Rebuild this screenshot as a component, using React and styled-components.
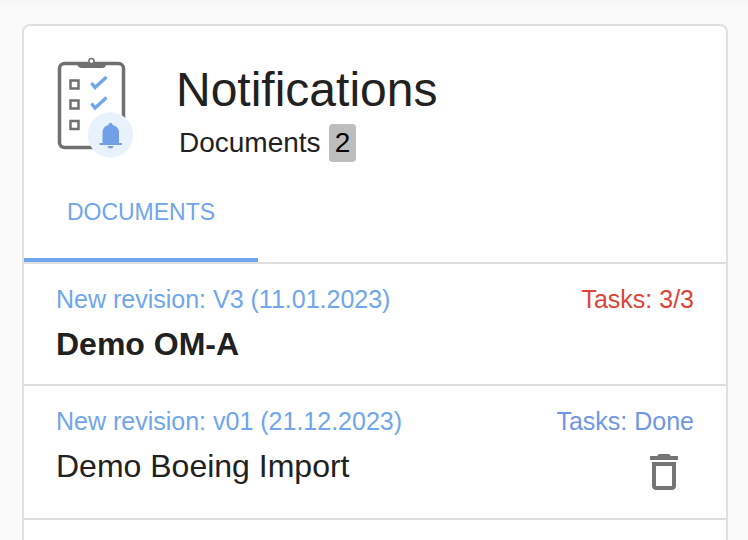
import React from "react";
import styled, { createGlobalStyle } from "styled-components";

const GlobalStyle = createGlobalStyle`
  *, *::before, *::after { box-sizing: border-box; }
  body {
    margin: 0;
    background: #fafafa;
    color: #212121;
    font-family: "Liberation Sans", Helvetica, Arial, sans-serif;
  }
`;

const Page = styled.main`
  display: flex;
  flex-direction: column;
  min-height: 100vh;
  padding: 24px 20px 0 22px;
  background: linear-gradient(#f5f5f5, #fafafa 8px);
`;

const Card = styled.section`
  flex: 1;
  background: #fff;
  border: 2px solid #e0e0e0;
  border-bottom: 0;
  border-radius: 8px 8px 0 0;
`;

const Header = styled.header`
  display: flex;
  gap: 40px;
  padding: 30px 32px 0;
`;

const Summary = styled.div`
  display: flex;
  flex-direction: column;
  gap: 4px;
  padding-top: 4px;
`;

const Title = styled.h1`
  margin: 0;
  font-size: 48px;
  font-weight: 400;
  line-height: 60px;
`;

const Count = styled.p`
  display: flex;
  align-items: center;
  gap: 8px;
  margin: 0;
  padding-left: 3px;
  font-size: 28px;
  line-height: 38px;
`;

const Badge = styled.span`
  padding: 0 6px;
  border-radius: 4px;
  background: #bdbdbd;
  color: #000;
`;

const Tabs = styled.div`
  display: flex;
  border-bottom: 2px solid #e0e0e0;
`;

const Tab = styled.button`
  width: 234px;
  height: 100px;
  padding: 4px 0 0;
  border: 0;
  border-bottom: 4px solid #6fa6ec;
  background: none;
  color: #6fa6ec;
  font-family: inherit;
  font-size: 23px;
  text-transform: uppercase;
  cursor: pointer;
`;

const List = styled.ul`
  margin: 0;
  padding: 0;
  list-style: none;
`;

const Item = styled.li`
  padding: 20px 32px;
  border-bottom: 2px solid #e0e0e0;
`;

const Row = styled.div`
  display: flex;
  align-items: flex-start;
  justify-content: space-between;
`;

const Caption = styled.span`
  color: ${({ $color }) => $color};
  font-size: 25px;
  line-height: 30px;
`;

const DocumentName = styled.h2`
  margin: 10px 0 0;
  font-size: 32px;
  font-weight: ${({ $unread }) => ($unread ? 700 : 400)};
  line-height: 40px;
`;

const IconButton = styled.button`
  display: flex;
  padding: 0;
  margin: 12px 6px 2px 0;
  border: 0;
  background: none;
  color: #757575;
  cursor: pointer;
`;

const documents = [
  { name: "Demo OM-A", revision: "V3 (11.01.2023)", tasks: "3/3", unread: true },
  { name: "Demo Boeing Import", revision: "v01 (21.12.2023)", tasks: "Done", unread: false },
];

function ClipboardIcon() {
  return (
    <svg width="80" height="104" viewBox="56 56 80 104" fill="none" aria-hidden="true">
      <rect x="59.5" y="63.5" width="64" height="84" rx="5" stroke="#707070" strokeWidth="3.5" />
      <path d="M77 62h29v2q0 4-4 4H82q-4 0-5-4z" fill="#707070" />
      <circle cx="91.5" cy="61" r="2.600" fill="#fff" stroke="#707070" strokeWidth="1.500" />
      <path d="M70.500 80.500h8v8h-8zM70.500 100.500h8v8h-8zM70.500 121h8v8h-8z" stroke="#707070" strokeWidth="2.500" />
      <path d="M91.500 83l3.500 4.500 11.500-10.500M91.500 103.500l3.500 4.500 11.500-10.500" stroke="#6fa6ec" strokeWidth="3.300" />
      <circle cx="110.500" cy="135" r="22.700" fill="#e8f2fc" />
      <path d="M102.500 143v-10.500q0-6 6-7.500v-.5q0-1.800 2-1.800t2 1.800v.5q6.500 1.500 6.500 7.500v10.500h3v2h-22.500v-2zM107.500 146h6q-.5 2.500-3 2.500t-3-2.500z" fill="#729fe5" />
    </svg>
  );
}

function TrashIcon() {
  return (
    <svg width="48" height="48" viewBox="0 0 24 24" fill="currentColor" aria-hidden="true">
      <path d="M6 19c0 1.100.9 2 2 2h8c1.100 0 2-.9 2-2V7H6v12zM8 9h8v10H8V9zm7.500-5l-1-1h-5l-1 1H5v2h14V4z" />
    </svg>
  );
}

export default function App() {
  return (
    <>
      <GlobalStyle />
      <Page>
        <Card>
          <Header>
            <ClipboardIcon />
            <Summary>
              <Title>Notifications</Title>
              <Count>
                Documents <Badge>{documents.length}</Badge>
              </Count>
            </Summary>
          </Header>
          <Tabs role="tablist">
            <Tab type="button" role="tab" aria-selected="true">Documents</Tab>
          </Tabs>
          <List>
            {documents.map((doc) => (
              <Item key={doc.name}>
                <Row>
                  <Caption $color="#6fa6ec">New revision: {doc.revision}</Caption>
                  <Caption $color={doc.unread ? "#dc4437" : "#7096e8"}>Tasks: {doc.tasks}</Caption>
                </Row>
                <Row>
                  <DocumentName $unread={doc.unread}>{doc.name}</DocumentName>
                  {!doc.unread && (
                    <IconButton type="button" aria-label={`Delete ${doc.name}`}>
                      <TrashIcon />
                    </IconButton>
                  )}
                </Row>
              </Item>
            ))}
          </List>
        </Card>
      </Page>
    </>
  );
}
